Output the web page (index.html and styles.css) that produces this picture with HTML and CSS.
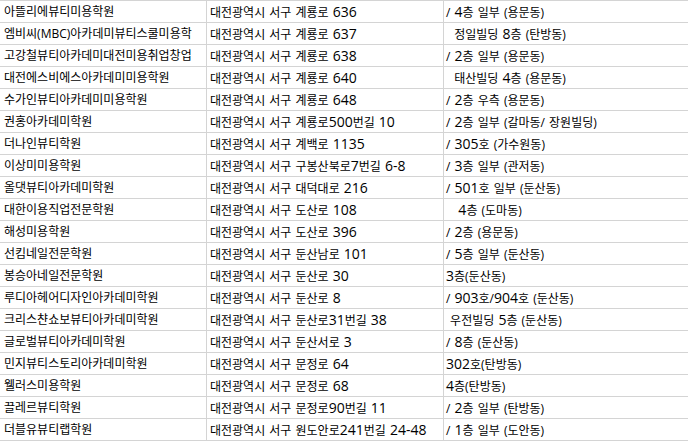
FILE: index.html
```html
<!DOCTYPE html>
<html lang="ko">
<head>
<meta charset="utf-8">
<title>학원 목록</title>
<link rel="stylesheet" href="styles.css">
</head>
<body>
<div class="sheet">
  <div class="c c1">아뜰리에뷰티미용학원</div><div class="c c2">대전광역시 서구 계룡로 <span class="n">636</span></div><div class="c c3">/ <span class="n">4</span>층 일부 (용문동)</div>
  <div class="c c1">엠비씨(MBC)아카데미뷰티스쿨미용학</div><div class="c c2">대전광역시 서구 계룡로 <span class="n">637</span></div><div class="c c3">  정일빌딩 <span class="n">8</span>층 (탄방동)</div>
  <div class="c c1">고강철뷰티아카데미대전미용취업창업</div><div class="c c2">대전광역시 서구 계룡로 <span class="n">638</span></div><div class="c c3">/ <span class="n">2</span>층 일부 (용문동)</div>
  <div class="c c1">대전에스비에스아카데미미용학원</div><div class="c c2">대전광역시 서구 계룡로 <span class="n">640</span></div><div class="c c3">  태산빌딩 <span class="n">4</span>층 (용문동)</div>
  <div class="c c1">수가인뷰티아카데미미용학원</div><div class="c c2">대전광역시 서구 계룡로 <span class="n">648</span></div><div class="c c3">/ <span class="n">2</span>층 우측 (용문동)</div>
  <div class="c c1">권홍아카데미학원</div><div class="c c2">대전광역시 서구 계룡로<span class="n">500</span>번길 <span class="n">10</span></div><div class="c c3">/ <span class="n">2</span>층 일부 (갈마동/ 장원빌딩)</div>
  <div class="c c1">더나인뷰티학원</div><div class="c c2">대전광역시 서구 계백로 <span class="n">1135</span></div><div class="c c3">/ <span class="n">305</span>호 (가수원동)</div>
  <div class="c c1">이상미미용학원</div><div class="c c2">대전광역시 서구 구봉산북로<span class="n">7</span>번길 <span class="n">6-8</span></div><div class="c c3">/ <span class="n">3</span>층 일부 (관저동)</div>
  <div class="c c1">올댓뷰티아카데미학원</div><div class="c c2">대전광역시 서구 대덕대로 <span class="n">216</span></div><div class="c c3">/ <span class="n">501</span>호 일부 (둔산동)</div>
  <div class="c c1">대한이용직업전문학원</div><div class="c c2">대전광역시 서구 도산로 <span class="n">108</span></div><div class="c c3">   <span class="n">4</span>층 (도마동)</div>
  <div class="c c1">해성미용학원</div><div class="c c2">대전광역시 서구 도산로 <span class="n">396</span></div><div class="c c3">/ <span class="n">2</span>층 (용문동)</div>
  <div class="c c1">선킴네일전문학원</div><div class="c c2">대전광역시 서구 둔산남로 <span class="n">101</span></div><div class="c c3">/ <span class="n">5</span>층 일부 (둔산동)</div>
  <div class="c c1">봉승아네일전문학원</div><div class="c c2">대전광역시 서구 둔산로 <span class="n">30</span></div><div class="c c3"><span class="n">3</span>층(둔산동)</div>
  <div class="c c1">루디아헤어디자인아카데미학원</div><div class="c c2">대전광역시 서구 둔산로 <span class="n">8</span></div><div class="c c3">/ <span class="n">903</span>호/<span class="n">904</span>호 (둔산동)</div>
  <div class="c c1">크리스챤쇼보뷰티아카데미학원</div><div class="c c2">대전광역시 서구 둔산로<span class="n">31</span>번길 <span class="n">38</span></div><div class="c c3"> 우전빌딩 <span class="n">5</span>층 (둔산동)</div>
  <div class="c c1">글로벌뷰티아카데미학원</div><div class="c c2">대전광역시 서구 둔산서로 <span class="n">3</span></div><div class="c c3">/ <span class="n">8</span>층 (둔산동)</div>
  <div class="c c1">민지뷰티스토리아카데미학원</div><div class="c c2">대전광역시 서구 문정로 <span class="n">64</span></div><div class="c c3"><span class="n">302</span>호(탄방동)</div>
  <div class="c c1">웰러스미용학원</div><div class="c c2">대전광역시 서구 문정로 <span class="n">68</span></div><div class="c c3"><span class="n">4</span>층(탄방동)</div>
  <div class="c c1">끌레르뷰티학원</div><div class="c c2">대전광역시 서구 문정로<span class="n">90</span>번길 <span class="n">11</span></div><div class="c c3">/ <span class="n">2</span>층 일부 (탄방동)</div>
  <div class="c c1">더블유뷰티랩학원</div><div class="c c2">대전광역시 서구 원도안로<span class="n">241</span>번길 <span class="n">24-48</span></div><div class="c c3">/ <span class="n">1</span>층 일부 (도안동)</div>
</div>
</body>
</html>
```

FILE: styles.css
```css
html, body {
  margin: 0;
  padding: 0;
  background: #ffffff;
}

.sheet {
  display: grid;
  grid-template-columns: 207px 237px 1fr;
  border-top: 1px solid #d4d4d4;
  font-family: "Open Sans", "Noto Sans CJK KR", sans-serif;
  font-size: 12px;
  word-spacing: 1px;
  color: #000000;
}

.c {
  box-sizing: border-box;
  height: 22px;
  line-height: 21px;
  padding: 0 3px;
  border-bottom: 1px solid #d4d4d4;
  border-right: 1px solid #d4d4d4;
  white-space: pre;
  overflow: hidden;
}

.c1 {
  padding-left: 4px;
}

.c3 {
  padding-left: 2px;
  border-right: none;
}

.n {
  font-size: 14px;
}
```
